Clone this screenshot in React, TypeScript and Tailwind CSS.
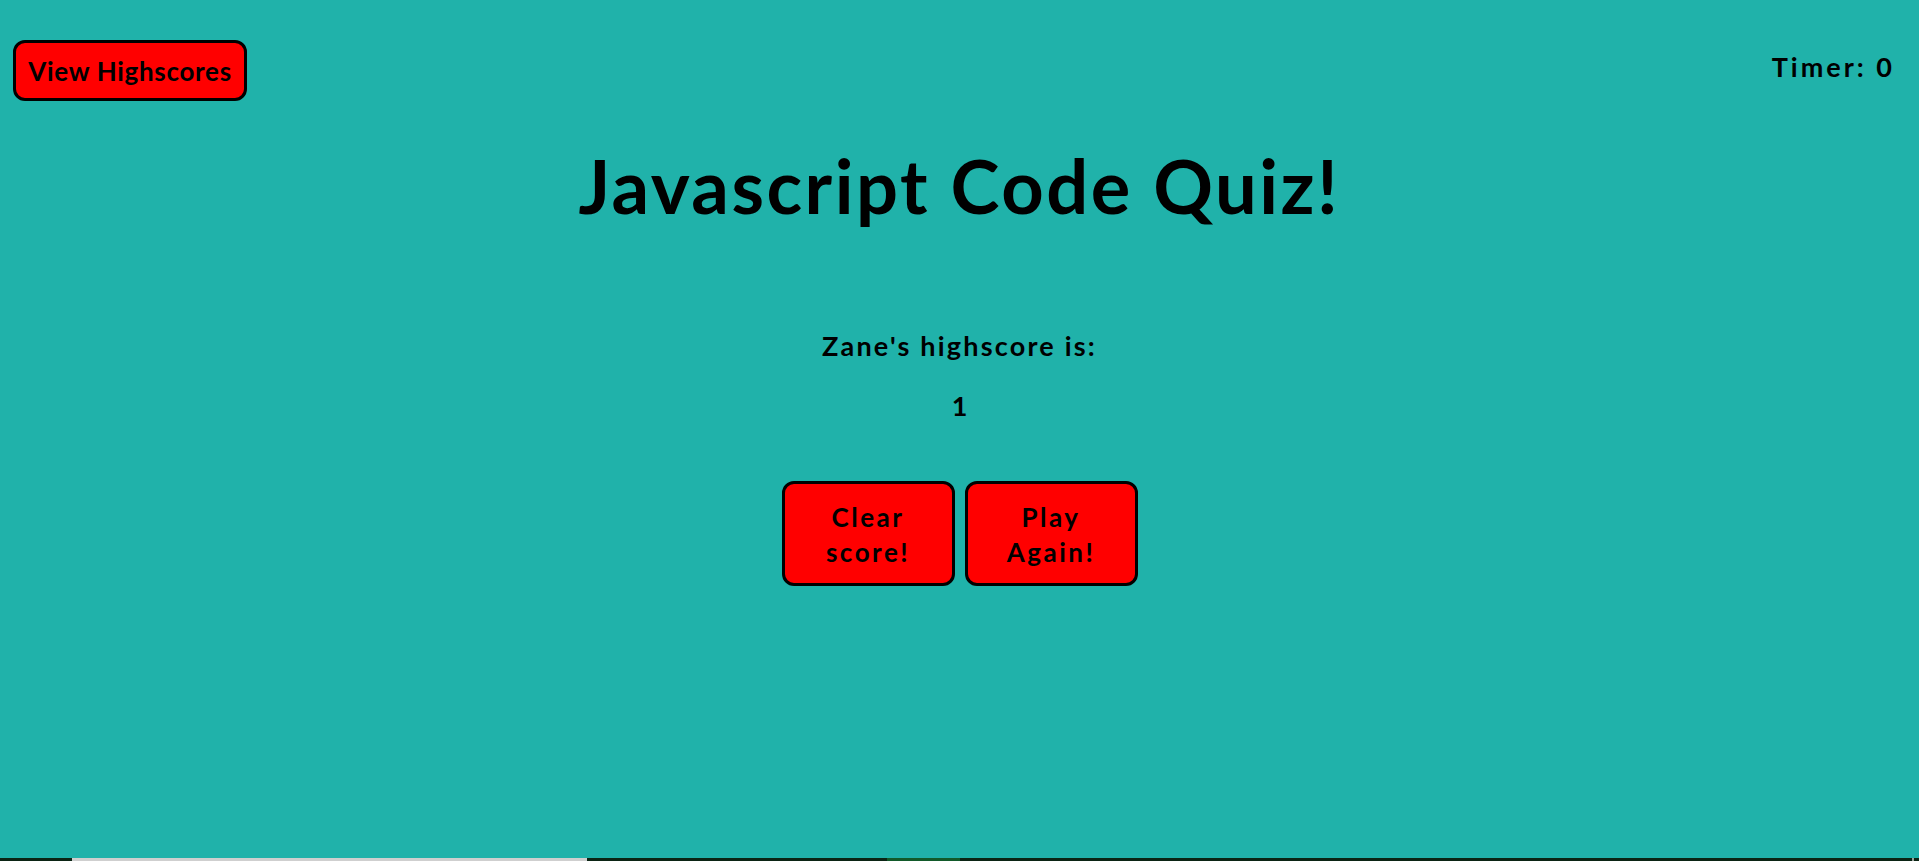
export default function App() {
  const font = { fontFamily: 'Lato, "Open Sans", sans-serif' };
  return (
    <div className="flex flex-col h-[861px] w-full bg-[#20b2aa] text-black font-bold overflow-hidden" style={font}>
      <div className="flex-1 flex flex-col">
        <div className="flex justify-between items-start pt-[40px] pl-[13px] pr-[24px]">
          <button className="w-[234px] h-[61px] bg-[#ff0000] border-[3px] border-black rounded-[12px] text-[26px] leading-[30px] font-bold tracking-[0.7px]">
            View Highscores
          </button>
          <div className="mt-[12px] text-[27px] leading-[30px] tracking-[3px]">Timer: 0</div>
        </div>
        <h1 className="mt-[45px] text-center text-[74px] leading-[80px] font-bold tracking-[2.5px]">Javascript Code Quiz!</h1>
        <p className="mt-[105px] text-center text-[27px] leading-[30px] tracking-[2.2px]">Zane's highscore is:</p>
        <p className="mt-[30px] text-center text-[27px] leading-[30px]">1</p>
        <div className="mt-[60px] flex justify-center gap-[10px]">
          <button className="w-[173px] h-[105px] bg-[#ff0000] border-[3px] border-black rounded-[12px] text-[26px] leading-[35px] font-bold tracking-[2.5px] px-[16px] pt-[2px]">
            Clear score!
          </button>
          <button className="w-[173px] h-[105px] bg-[#ff0000] border-[3px] border-black rounded-[12px] text-[26px] leading-[35px] font-bold tracking-[2.5px] px-[16px] pt-[2px]">
            Play Again!
          </button>
        </div>
      </div>
      <div className="h-[3px] flex shrink-0">
        <div className="w-[72px] bg-[#0b2414]" />
        <div className="w-[515px] bg-[#cfcfcf]" />
        <div className="w-[300px] bg-[#0b2414]" />
        <div className="w-[73px] bg-[#125a2a]" />
        <div className="flex-1 bg-[#0b2414]" />
        <div className="w-[2px] bg-[#9aa29c]" />
        <div className="w-[5px] bg-[#0b2414]" />
      </div>
    </div>
  );
}
